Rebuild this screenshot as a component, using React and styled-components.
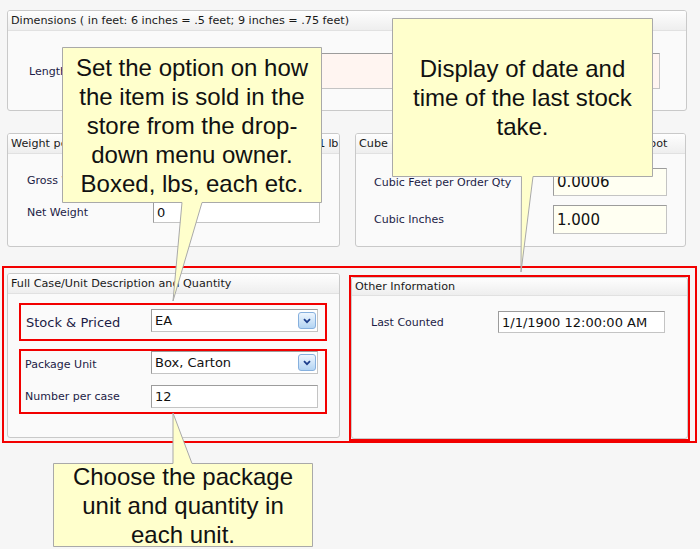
import styled, { createGlobalStyle } from "styled-components";

const GlobalStyle = createGlobalStyle`
  * { box-sizing: border-box; }
  body { margin: 0; background: #f6f6f6; }
`;

const Page = styled.div`
  position: relative;
  width: 700px;
  height: 549px;
  overflow: hidden;
  padding-top: 10px;
  background: #f6f6f6;
  font-family: "DejaVu Sans", Verdana, sans-serif;
`;

const Panel = styled.div`
  width: ${(p) => (p.$w ? `${p.$w}px` : "100%")};
  height: ${(p) => (p.$h ? `${p.$h}px` : "100%")};
  margin-left: ${(p) => p.$ml || 0}px;
  border: 1px solid #c9c9c9;
  border-radius: 3px;
  background: #fafafa;
  overflow: hidden;
  flex-shrink: 0;
`;

const PanelHeader = styled.div`
  display: flex;
  justify-content: space-between;
  height: ${(p) => p.$h || 20}px;
  line-height: ${(p) => (p.$h || 20) - 1}px;
  padding: 0 3px;
  font-size: 11.2px;
  color: #1a1a1a;
  white-space: nowrap;
  overflow: hidden;
  background: linear-gradient(#fefefe, #eeeeee);
  border-bottom: 1px solid #e1e1e1;
`;

const HeaderEnd = styled.span`
  margin-right: -2px;
  letter-spacing: -0.3px;
`;

const PanelBody = styled.div`
  padding: ${(p) => p.$pad};
  display: flex;
  flex-direction: column;
  gap: ${(p) => p.$gap || 0}px;
`;

const PanelRow = styled.div`
  display: flex;
  gap: 15px;
  margin-top: 22px;
  padding-left: 7px;
`;

const FieldRow = styled.div`
  display: flex;
  align-items: center;
  height: ${(p) => p.$h}px;
  margin-top: ${(p) => p.$mt || 0}px;
`;

const Label = styled.div`
  width: ${(p) => p.$w}px;
  flex-shrink: 0;
  font-size: ${(p) => (p.$big ? 13 : 11)}px;
  padding-top: ${(p) => p.$nudge || 0}px;
  color: #1c1c46;
  white-space: nowrap;
`;

const Field = styled.div`
  position: relative;
  width: ${(p) => p.$w}px;
  height: 100%;
  display: flex;
  align-items: center;
  padding-left: 3px;
  font-size: ${(p) => p.$fs || 13}px;
  color: #111;
  background: ${(p) => p.$bg || "#ffffff"};
  border: 1px solid;
  border-color: #9c9c9c #c4c4c4 #c4c4c4 #9c9c9c;
  white-space: nowrap;
`;

const DropButton = styled.div`
  position: absolute;
  right: 1px;
  top: 2px;
  width: 18px;
  height: 17px;
  border: 1px solid #86b0de;
  border-radius: 3px;
  background: linear-gradient(#eef6fe, #b3d4f3);
  display: flex;
  align-items: center;
  justify-content: center;
`;

const RedFrame = styled.div`
  display: flex;
  align-items: flex-start;
  width: ${(p) => p.$w}px;
  height: ${(p) => p.$h}px;
  margin: ${(p) => p.$m};
  padding: ${(p) => p.$pad || 0};
  border: 2px solid #f20000;
  flex-shrink: 0;
`;

const GroupBox = styled.div`
  width: 308px;
  height: ${(p) => p.$h}px;
  margin-top: ${(p) => p.$mt || 0}px;
  padding: ${(p) => p.$pad};
  border: 2px solid #f20000;
  display: flex;
  flex-direction: column;
`;

const CalloutBox = styled.div`
  position: absolute;
  left: ${(p) => p.$x}px;
  top: ${(p) => p.$y}px;
  width: ${(p) => p.$w}px;
  height: ${(p) => p.$h}px;
  z-index: 5;
  display: flex;
  flex-direction: column;
  align-items: center;
  justify-content: center;
  text-align: center;
  font-family: "Liberation Sans", Arial, sans-serif;
  font-size: 24px;
  line-height: 29px;
  color: #111;
`;

const CalloutShape = styled.svg`
  position: absolute;
  left: 0;
  top: 0;
  overflow: visible;
  z-index: -1;
`;

const CalloutLine = styled.div`
  white-space: nowrap;
`;

const Chevron = () => (
  <svg width="8" height="6" viewBox="0 0 8 6">
    <path d="M1 1.2 L4 4.2 L7 1.2" fill="none" stroke="#1d3f8c" strokeWidth="1.8" />
  </svg>
);

const Select = ({ w, children }) => (
  <Field $w={w}>
    {children}
    <DropButton>
      <Chevron />
    </DropButton>
  </Field>
);

const Callout = ({ x, y, w, h, d, lines }) => (
  <CalloutBox $x={x} $y={y} $w={w} $h={h}>
    <CalloutShape width={w} height={h}>
      <path d={d} fill="#ffffcc" stroke="#a9a9a9" strokeWidth="1" />
    </CalloutShape>
    {lines.map((l) => (
      <CalloutLine key={l}>{l}</CalloutLine>
    ))}
  </CalloutBox>
);

const App = () => {
  return (
    <Page>
      <GlobalStyle />

      <Panel $w={680} $h={101} $ml={7}>
        <PanelHeader>
          <span>Dimensions ( in feet: 6 inches = .5 feet; 9 inches = .75 feet)</span>
        </PanelHeader>
        <PanelBody $pad="22px 0 0 21px">
          <FieldRow $h={36}>
            <Label $w={124}>Length</Label>
            <Field $w={507} $bg="#fff5f1"></Field>
          </FieldRow>
        </PanelBody>
      </Panel>

      <PanelRow>
        <Panel $w={333} $h={114}>
          <PanelHeader>
            <span>Weight per Order Qty</span>
            <HeaderEnd>( 8 oz = .5 lb; 16 oz = 1 lb</HeaderEnd>
          </PanelHeader>
          <PanelBody $pad="15px 0 0 19px" $gap={10}>
            <FieldRow $h={22}>
              <Label $w={126}>Gross Weight</Label>
              <Field $w={167}>0</Field>
            </FieldRow>
            <FieldRow $h={22}>
              <Label $w={126}>Net Weight</Label>
              <Field $w={167}>0</Field>
            </FieldRow>
          </PanelBody>
        </Panel>
        <Panel $w={331} $h={114}>
          <PanelHeader>
            <span>Cube per Order Qty ( 1,728 cubic inches = 1 cubic foot</span>
          </PanelHeader>
          <PanelBody $pad="14px 0 0 18px" $gap={9}>
            <FieldRow $h={28}>
              <Label $w={179}>Cubic Feet per Order Qty</Label>
              <Field $w={114} $fs={15} $bg="#fffff2">0.0006</Field>
            </FieldRow>
            <FieldRow $h={29}>
              <Label $w={179}>Cubic Inches</Label>
              <Field $w={114} $fs={15} $bg="#fffff2">1.000</Field>
            </FieldRow>
          </PanelBody>
        </Panel>
      </PanelRow>

      <RedFrame $w={695} $h={177} $m="19px 0 0 2px" $pad="5px 0 0 3px">
        <Panel $w={333} $h={165}>
          <PanelHeader>
            <span>Full Case/Unit Description and Quantity</span>
          </PanelHeader>
          <PanelBody $pad="9px 0 0 11px">
            <GroupBox $h={38} $pad="4px 7px 0 5px">
              <FieldRow $h={23}>
                <Label $w={125} $big $nudge={4}>Stock &amp; Priced</Label>
                <Select w={167}>EA</Select>
              </FieldRow>
            </GroupBox>
            <GroupBox $h={65} $mt={8} $pad="0 7px 0 4px">
              <FieldRow $h={23}>
                <Label $w={126} $nudge={3}>Package Unit</Label>
                <Select w={167}>Box, Carton</Select>
              </FieldRow>
              <FieldRow $h={23} $mt={11}>
                <Label $w={126}>Number per case</Label>
                <Field $w={167}>12</Field>
              </FieldRow>
            </GroupBox>
          </PanelBody>
        </Panel>
        <RedFrame $w={341} $h={166} $m="2px 0 0 9px">
          <Panel>
            <PanelHeader $h={18}>
              <span>Other Information</span>
            </PanelHeader>
            <PanelBody $pad="15px 0 0 19px">
              <FieldRow $h={22}>
                <Label $w={127}>Last Counted</Label>
                <Field $w={167}>1/1/1900 12:00:00 AM</Field>
              </FieldRow>
            </PanelBody>
          </Panel>
        </RedFrame>
      </RedFrame>

      <Callout
        x={62}
        y={47}
        w={260}
        h={156}
        d="M0.5 0.5 H259.5 V155.5 H140 L111 254 L120 155.5 H0.5 Z"
        lines={[
          "Set the option on how",
          "the item is sold in the",
          "store from the drop-",
          "down menu owner.",
          "Boxed, lbs, each etc.",
        ]}
      />
      <Callout
        x={392}
        y={18}
        w={261}
        h={159}
        d="M0.5 0.5 H260.5 V158.5 H141 L129 254 L129.5 158.5 H0.5 Z"
        lines={["Display of date and", "time of the last stock", "take."]}
      />
      <Callout
        x={53}
        y={463}
        w={260}
        h={84}
        d="M0.5 0.5 H120 L120 -50 L139 0.5 H259.5 V83.5 H0.5 Z"
        lines={["Choose the package", "unit and quantity in", "each unit."]}
      />
    </Page>
  );
};

export default App;
